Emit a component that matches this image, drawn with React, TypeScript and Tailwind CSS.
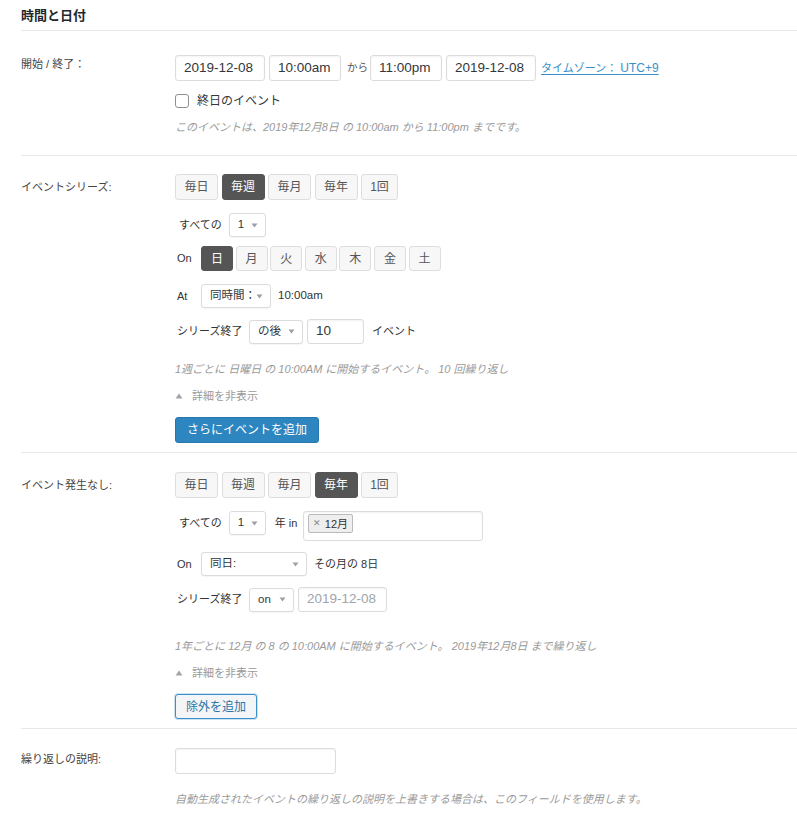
import React from "react";

const Caret = () => (
  <svg width="7" height="5" viewBox="0 0 7 5" className="shrink-0">
    <path d="M0.5 0.5 L6.5 0.5 L3.5 4.5 Z" fill="#9aa0a6" />
  </svg>
);

const SelectBox: React.FC<{ label: string; width: string }> = ({ label, width }) => (
  <div
    className={`${width} h-[24px] shrink-0 flex items-center justify-between pl-[8px] pr-[7px] bg-white border border-[#dcdcdc] rounded-[3px] text-[11.5px] text-[#32373c] whitespace-nowrap shadow-[0_1px_1px_rgba(0,0,0,0.04)]`}
  >
    <span>{label}</span>
    <Caret />
  </div>
);

const TextBox: React.FC<{ value?: string; width: string; height?: string; placeholder?: boolean }> = ({
  value,
  width,
  height = "h-[26px]",
  placeholder,
}) => (
  <div
    className={`${width} ${height} shrink-0 flex items-center px-[8px] bg-white border border-[#dcdcdc] rounded-[3px] text-[13.5px] whitespace-nowrap overflow-hidden shadow-[inset_0_1px_2px_rgba(0,0,0,0.05)] ${
      placeholder ? "text-[#a0a5aa]" : "text-[#32373c]"
    }`}
  >
    {value}
  </div>
);

const Seg: React.FC<{ items: string[]; active: string; small?: boolean }> = ({ items, active, small }) => (
  <div className={`flex ${small ? "gap-[2.6px]" : "gap-[3.5px]"}`}>
    {items.map((it) => (
      <div
        key={it}
        className={`${small ? "h-[25px] w-[32px]" : it === "1回" ? "h-[26px] w-[37px]" : "h-[26px] w-[43px]"} flex items-center justify-center border rounded-[3px] text-[12px] ${
          it === active
            ? "bg-[#555555] border-[#555555] text-white"
            : "bg-[#f7f7f7] border-[#dedede] text-[#555]"
        }`}
      >
        {it}
      </div>
    ))}
  </div>
);

const Label: React.FC<{ children: React.ReactNode; pt: string }> = ({ children, pt }) => (
  <div className={`w-[154px] shrink-0 ${pt} text-[11px] leading-[16px] text-[#444]`}>{children}</div>
);

const Desc: React.FC<{ children: React.ReactNode; mt: string }> = ({ children, mt }) => (
  <div className={`${mt} h-[16px] leading-[16px] text-[11px] italic text-[#9a9a9a]`}>{children}</div>
);

const Details: React.FC<{ mt: string }> = ({ mt }) => (
  <div className={`${mt} h-[16px] flex items-center gap-[9px] text-[11px] text-[#9a9a9a]`}>
    <svg width="8" height="6" viewBox="0 0 8 6">
      <path d="M4 0.5 L7.5 5.5 L0.5 5.5 Z" fill="#a0a5aa" />
    </svg>
    <span>詳細を非表示</span>
  </div>
);

export default function App() {
  return (
    <div className="min-h-screen bg-white font-['Liberation_Sans','Noto_Sans_CJK_JP',sans-serif]">
      <div className="ml-[21px]">
        <div className="h-[31px] pt-[7px] border-b border-[#e8e8e8] text-[13px] leading-[18px] font-bold text-[#23282d]">
          時間と日付
        </div>

        {/* 開始 / 終了 */}
        <div className="flex border-b border-[#e8e8e8]">
          <Label pt="pt-[25px]">開始 / 終了：</Label>
          <div className="flex-1 pt-[24px] pb-[20px]">
            <div className="flex items-center h-[26px]">
              <TextBox value="2019-12-08" width="w-[90px]" />
              <div className="w-[4px]" />
              <TextBox value="10:00am" width="w-[72px]" />
              <span className="ml-[6px] w-[23px] text-[10.5px] text-[#555]">から</span>
              <TextBox value="11:00pm" width="w-[72px]" />
              <div className="w-[4px]" />
              <TextBox value="2019-12-08" width="w-[90px]" />
              <span className="ml-[5px] text-[11px] text-[#3a8fc8] underline underline-offset-2 whitespace-nowrap">
                タイムゾーン： <span className="text-[12px]">UTC+9</span>
              </span>
            </div>
            <div className="mt-[12px] h-[16px] flex items-center gap-[8px]">
              <div className="w-[14px] h-[14px] border border-[#8c8f94] rounded-[3px] bg-white" />
              <span className="text-[12px] text-[#32373c]">終日のイベント</span>
            </div>
            <Desc mt="mt-[10px]">このイベントは、2019年12月8日 の 10:00am から 11:00pm までです。</Desc>
          </div>
        </div>

        {/* イベントシリーズ */}
        <div className="flex border-b border-[#e8e8e8]">
          <Label pt="pt-[23px]">イベントシリーズ:</Label>
          <div className="flex-1 pt-[18px] pb-[9px]">
            <Seg items={["毎日", "毎週", "毎月", "毎年", "1回"]} active="毎週" />
            <div className="mt-[13px] flex items-center gap-[7px] pl-[4px] text-[11px] text-[#333]">
              <span>すべての</span>
              <SelectBox label="1" width="w-[37px]" />
            </div>
            <div className="mt-[9px] flex items-center gap-[10px] pl-[2px] text-[11px] text-[#333]">
              <span className="w-[14px]">On</span>
              <Seg items={["日", "月", "火", "水", "木", "金", "土"]} active="日" small />
            </div>
            <div className="mt-[13px] flex items-center gap-[10px] pl-[2px] text-[11px] text-[#333]">
              <span className="w-[14px]">At</span>
              <SelectBox label="同時間：" width="w-[70px]" />
              <span className="ml-[-3px] text-[11.5px]">10:00am</span>
            </div>
            <div className="mt-[11px] flex items-center pl-[2px] text-[11px] text-[#333]">
              <span className="w-[72px]">シリーズ終了</span>
              <SelectBox label="の後" width="w-[54px]" />
              <div className="w-[4px]" />
              <TextBox value="10" width="w-[57px]" height="h-[25px]" />
              <span className="ml-[8px]">イベント</span>
            </div>
            <Desc mt="mt-[17px]">1週ごとに 日曜日 の 10:00AM に開始するイベント。 10 回繰り返し</Desc>
            <Details mt="mt-[11px]" />
            <div className="mt-[13px] inline-flex items-center h-[26px] px-[11px] rounded-[3px] bg-[#2d86c0] border border-[#2779ad] text-white text-[12px]">
              さらにイベントを追加
            </div>
          </div>
        </div>

        {/* イベント発生なし */}
        <div className="flex border-b border-[#e8e8e8]">
          <Label pt="pt-[24px]">イベント発生なし:</Label>
          <div className="flex-1 pt-[19px] pb-[9px]">
            <Seg items={["毎日", "毎週", "毎月", "毎年", "1回"]} active="毎年" />
            <div className="mt-[13px] flex items-start pl-[4px] text-[11px] text-[#333]">
              <span className="h-[24px] flex items-center mr-[7px]">すべての</span>
              <SelectBox label="1" width="w-[37px]" />
              <span className="h-[24px] w-[28px] flex items-center ml-[9px]">年 in</span>
              <div className="w-[180px] h-[30px] bg-white border border-[#dcdcdc] rounded-[3px] pl-[4px] pt-[2px] shadow-[inset_0_1px_2px_rgba(0,0,0,0.05)]">
                <div className="inline-flex items-center gap-[4px] h-[19px] px-[4px] bg-[#eeeeee] border border-[#bbbbbb] rounded-[2px] text-[11px] text-[#333]">
                  <span className="text-[9px] text-[#888]">✕</span>
                  <span>12月</span>
                </div>
              </div>
            </div>
            <div className="mt-[11px] flex items-center gap-[10px] pl-[2px] text-[11px] text-[#333]">
              <span className="w-[14px]">On</span>
              <SelectBox label="同日:" width="w-[106px]" />
              <span className="ml-[-3px]">その月の 8日</span>
            </div>
            <div className="mt-[11px] flex items-center pl-[2px] text-[11px] text-[#333]">
              <span className="w-[72px]">シリーズ終了</span>
              <SelectBox label="on" width="w-[45px]" />
              <div className="w-[4px]" />
              <TextBox value="2019-12-08" width="w-[89px]" height="h-[25px]" placeholder />
            </div>
            <Desc mt="mt-[26px]">1年ごとに 12月 の 8 の 10:00AM に開始するイベント。 2019年12月8日 まで繰り返し</Desc>
            <Details mt="mt-[11px]" />
            <div className="mt-[13px] inline-flex items-center h-[25px] px-[10px] rounded-[3px] bg-[#f3f5f6] border border-[#3a8fc8] text-[#2a74a8] text-[12px] shadow-[0_0_0_1px_rgba(58,143,200,0.25)]">
              除外を追加
            </div>
          </div>
        </div>

        {/* 繰り返しの説明 */}
        <div className="flex">
          <Label pt="pt-[22px]">繰り返しの説明:</Label>
          <div className="flex-1 pt-[19px] pb-[8px]">
            <TextBox width="w-[161px]" />
            <Desc mt="mt-[17px]">自動生成されたイベントの繰り返しの説明を上書きする場合は、このフィールドを使用します。</Desc>
          </div>
        </div>
      </div>
    </div>
  );
}
